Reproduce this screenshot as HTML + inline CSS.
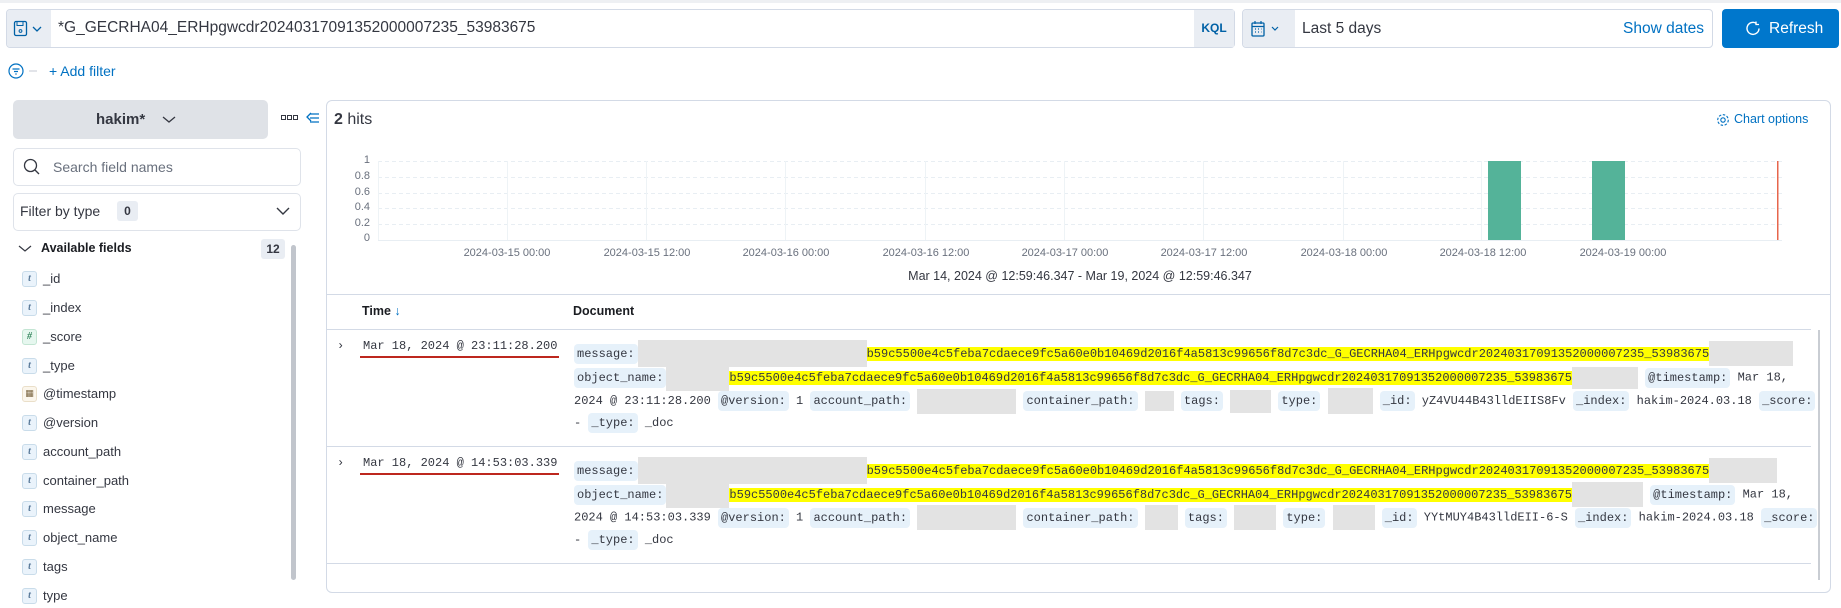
<!DOCTYPE html>
<html><head><meta charset="utf-8"><style>
*{box-sizing:border-box;margin:0;padding:0}
body{width:1841px;height:608px;background:#fff;font-family:"Liberation Sans",sans-serif;color:#343741;position:relative;overflow:hidden}
.a{position:absolute}
.mono{font-family:"Liberation Mono",monospace;font-size:12px}
.pill{display:inline-block;background:#e6f1fa;border-radius:4px;padding:0 3px;line-height:20px;color:#343741}
.g{display:inline-block;background:#e3e3e3;vertical-align:middle}
.y{background:#ffff00}
.line{position:absolute;left:574px;white-space:nowrap;line-height:22px}
.fi{position:absolute;left:22px;font-size:13px;color:#343741;line-height:16px}
.fi i{display:inline-block;width:15px;height:16px;border:1px solid #c9dcea;background:#eaf3fb;border-radius:3px;font-size:10px;font-weight:bold;color:#5a7a9a;text-align:center;line-height:14px;margin-right:6px;vertical-align:top;font-family:"Liberation Serif",serif}
.tick{position:absolute;top:247px;font-size:11px;color:#69707d;width:120px;text-align:center}
.yl{position:absolute;left:350px;width:20px;text-align:right;font-size:11px;color:#69707d}
</style></head><body>
<div class="a" style="left:0;top:0;width:1841px;height:3px;background:#eef0f3"></div>
<div class="a" style="left:6px;top:9px;width:1229px;height:39px;border:1px solid #d3dae6;border-radius:4px;background:#fff"></div>
<div class="a" style="left:7px;top:10px;width:44px;height:37px;background:#e9edf3;border-radius:3px 0 0 3px"></div>
<svg class="a" style="left:13px;top:20px" width="34" height="18"><rect x="1.5" y="1.5" width="12" height="14" rx="1.5" fill="none" stroke="#0061a6" stroke-width="1.3"/><rect x="4" y="1.5" width="6" height="4" fill="none" stroke="#0061a6"/><circle cx="7.5" cy="11" r="1.4" fill="none" stroke="#0061a6"/><path d="M20 7l4 4 4-4" fill="none" stroke="#0061a6" stroke-width="1.3"/></svg>
<div class="a" style="left:58px;top:19px;font-size:15.5px;color:#343741">*G_GECRHA04_ERHpgwcdr20240317091352000007235_53983675</div>
<div class="a" style="left:1194px;top:10px;width:40px;height:37px;background:#e9edf3;font-size:12px;font-weight:bold;color:#0061a6;text-align:center;line-height:37px">KQL</div>
<div class="a" style="left:1242px;top:9px;width:471px;height:39px;border:1px solid #d3dae6;border-radius:4px"></div>
<div class="a" style="left:1243px;top:10px;width:52px;height:37px;background:#e9edf3;border-radius:3px 0 0 3px"></div>
<svg class="a" style="left:1250px;top:20px" width="36" height="18"><rect x="2" y="3" width="12" height="13" rx="1" fill="none" stroke="#0061a6" stroke-width="1.3"/><path d="M2 6.5h12M5 1v3M11 1v3" stroke="#0061a6" stroke-width="1.2"/><path d="M5 9h1M8 9h1M11 9h0.5M5 12h1M8 12h1M11 12h0.5" stroke="#0061a6" stroke-width="1.2"/><path d="M22 7l3 3 3-3" fill="none" stroke="#0061a6" stroke-width="1.2"/></svg>
<div class="a" style="left:1302px;top:20px;font-size:15.5px">Last 5 days</div>
<div class="a" style="left:1623px;top:20px;font-size:15.5px;color:#0071c2">Show dates</div>
<div class="a" style="left:1722px;top:9px;width:117px;height:39px;background:#0077cc;border-radius:4px;color:#fff;font-size:15.5px;line-height:39px"><svg style="position:absolute;left:24px;top:12px" width="15" height="15"><path d="M10.5 2.5A6 6 0 1 0 13 7.5" fill="none" stroke="#fff" stroke-width="1.4"/><path d="M10 0.5v3h3" fill="none" stroke="#fff" stroke-width="1.3"/></svg><span style="position:absolute;left:47px">Refresh</span></div>
<svg class="a" style="left:8px;top:63px" width="30" height="16"><circle cx="8" cy="8" r="7" fill="none" stroke="#0071c2" stroke-width="1.2"/><path d="M4.5 6h7M6 8.5h4M7.3 11h1.4" stroke="#0071c2" stroke-width="1.2"/><path d="M21 8h8" stroke="#c5cad3"/></svg>
<div class="a" style="left:49px;top:63px;font-size:14px;color:#0071c2">+ Add filter</div>
<!-- sidebar -->
<div class="a" style="left:13px;top:100px;width:255px;height:39px;background:#dfe2e7;border-radius:5px"></div>
<div class="a" style="left:96px;top:111px;font-size:15px;font-weight:bold;color:#343741">hakim*</div>
<svg class="a" style="left:162px;top:115px" width="14" height="10"><path d="M1 2l6 5 6-5" fill="none" stroke="#343741" stroke-width="1.3"/></svg>
<svg class="a" style="left:281px;top:115px" width="17" height="6"><rect x="0.5" y="0.5" width="4" height="4" fill="none" stroke="#343741"/><rect x="6.5" y="0.5" width="4" height="4" fill="none" stroke="#343741"/><rect x="12.5" y="0.5" width="4" height="4" fill="none" stroke="#343741"/></svg>
<svg class="a" style="left:306px;top:112px" width="14" height="13"><path d="M5 1L1 5l4 4M4 2h9M4 6h9M4 10h9" fill="none" stroke="#0071c2" stroke-width="1.3"/></svg>
<div class="a" style="left:13px;top:148px;width:288px;height:38px;border:1px solid #dfe3ea;border-radius:5px"></div>
<svg class="a" style="left:23px;top:158px" width="18" height="18"><circle cx="7.5" cy="7.5" r="6" fill="none" stroke="#343741" stroke-width="1.3"/><path d="M12 12l4 4" stroke="#343741" stroke-width="1.3"/></svg>
<div class="a" style="left:53px;top:159px;font-size:14px;color:#69707d">Search field names</div>
<div class="a" style="left:13px;top:193px;width:288px;height:38px;border:1px solid #dfe3ea;border-radius:5px"></div>
<div class="a" style="left:20px;top:203px;font-size:14px;color:#343741">Filter by type</div>
<div class="a" style="left:117px;top:201px;width:21px;height:20px;background:#e9edf3;border-radius:3px;font-size:12px;font-weight:bold;text-align:center;line-height:20px">0</div>
<svg class="a" style="left:276px;top:206px" width="14" height="10"><path d="M1 2l6 6 6-6" fill="none" stroke="#343741" stroke-width="1.4"/></svg>
<svg class="a" style="left:18px;top:244px" width="14" height="10"><path d="M1 2l6 5 6-5" fill="none" stroke="#343741" stroke-width="1.2"/></svg>
<div class="a" style="left:41px;top:241px;font-size:12.5px;font-weight:bold;color:#1a1c21">Available fields</div>
<div class="a" style="left:261px;top:239px;width:24px;height:20px;background:#e9edf3;border-radius:3px;font-size:12px;font-weight:bold;text-align:center;line-height:20px">12</div>
<div class="a" style="left:291px;top:245px;width:5px;height:335px;background:#c1c5cc;border-radius:3px"></div>
<div class="fi" style="top:271px"><i>t</i>_id</div>
<div class="fi" style="top:300px"><i>t</i>_index</div>
<div class="fi" style="top:329px"><i style="background:#e6f7ef;border-color:#c3e5d3;color:#3c8a63">#</i>_score</div>
<div class="fi" style="top:358px"><i>t</i>_type</div>
<div class="fi" style="top:386px"><i style="background:#fbf6ec;border-color:#eadfc9;color:#7a6540;font-family:'DejaVu Sans';font-size:9px">&#9638;</i>@timestamp</div>
<div class="fi" style="top:415px"><i>t</i>@version</div>
<div class="fi" style="top:444px"><i>t</i>account_path</div>
<div class="fi" style="top:473px"><i>t</i>container_path</div>
<div class="fi" style="top:501px"><i>t</i>message</div>
<div class="fi" style="top:530px"><i>t</i>object_name</div>
<div class="fi" style="top:559px"><i>t</i>tags</div>
<div class="fi" style="top:588px"><i>t</i>type</div>
<!-- main panel -->
<div class="a" style="left:326px;top:100px;width:1505px;height:493px;border:1px solid #d3dae6;border-radius:6px"></div>
<div class="a" style="left:334px;top:111px;font-size:16px"><b>2</b> hits</div>
<svg class="a" style="left:1716px;top:113px" width="14" height="14"><circle cx="7" cy="7" r="2.2" fill="none" stroke="#0071c2" stroke-width="1.1"/><circle cx="7" cy="7" r="5.3" fill="none" stroke="#0071c2" stroke-width="1.1" stroke-dasharray="2.5 1.6"/></svg>
<div class="a" style="left:1734px;top:112px;font-size:12.5px;color:#0071c2">Chart options</div>
<svg class="a" style="left:0;top:0" width="1841" height="300">
<g stroke="#e8eef3" stroke-dasharray="4 3"><path d="M378 161.5H1782M378 177.5H1782M378 193.5H1782M378 208.5H1782M378 224.5H1782"/></g>
<g stroke="#eef3f6"><path d="M378.5 161V240M507.5 161V240M646.5 161V240M785.5 161V240M925.5 161V240M1064.5 161V240M1203.5 161V240M1343.5 161V240M1481.5 161V240M1621.5 161V240"/></g>
<path d="M378 240.5H1782" stroke="#e8eef3"/>
<rect x="1488" y="161" width="33" height="79" fill="#54b399"/>
<rect x="1592" y="161" width="33" height="79" fill="#54b399"/>
<rect x="1777" y="161" width="1.5" height="79" fill="#e7664c"/>
</svg>
<div class="yl" style="top:154px">1</div><div class="yl" style="top:170px">0.8</div><div class="yl" style="top:186px">0.6</div><div class="yl" style="top:201px">0.4</div><div class="yl" style="top:217px">0.2</div><div class="yl" style="top:232px">0</div>
<div class="tick" style="left:447px">2024-03-15 00:00</div>
<div class="tick" style="left:587px">2024-03-15 12:00</div>
<div class="tick" style="left:726px">2024-03-16 00:00</div>
<div class="tick" style="left:866px">2024-03-16 12:00</div>
<div class="tick" style="left:1005px">2024-03-17 00:00</div>
<div class="tick" style="left:1144px">2024-03-17 12:00</div>
<div class="tick" style="left:1284px">2024-03-18 00:00</div>
<div class="tick" style="left:1423px">2024-03-18 12:00</div>
<div class="tick" style="left:1563px">2024-03-19 00:00</div>
<div class="a" style="left:880px;top:269px;font-size:12.5px;color:#343741;width:400px;text-align:center">Mar 14, 2024 @ 12:59:46.347 - Mar 19, 2024 @ 12:59:46.347</div>
<div class="a" style="left:327px;top:294px;width:1503px;height:1px;background:#d3dae6"></div>
<div class="a" style="left:362px;top:304px;font-size:12.5px;font-weight:bold;color:#1a1c21">Time <span style="color:#0071c2;font-weight:normal">&#8595;</span></div>
<div class="a" style="left:573px;top:304px;font-size:12.5px;font-weight:bold;color:#1a1c21">Document</div>
<div class="a" style="left:327px;top:329px;width:1484px;height:1px;background:#d3dae6"></div>
<div class="a" style="left:327px;top:446px;width:1484px;height:1px;background:#d3dae6"></div>
<div class="a" style="left:327px;top:563px;width:1484px;height:1px;background:#d3dae6"></div>
<div class="a" style="left:1818px;top:330px;width:2px;height:250px;background:#c9cdd3"></div>

<div class="a mono" style="left:337px;top:339px;color:#343741">&#8250;</div>
<div class="a mono" style="left:363px;top:339px">Mar 18, 2024 @ 23:11:28.200</div>
<div class="a" style="left:360px;top:356px;width:199px;height:2px;background:#bd271e"></div>
<div class="line mono" style="top:340px"><span class="pill">message:</span><span class="g" style="width:229px;height:27px"></span><span class="y">b59c5500e4c5feba7cdaece9fc5a60e0b10469d2016f4a5813c99656f8d7c3dc_G_GECRHA04_ERHpgwcdr20240317091352000007235_53983675</span><span class="g" style="width:84px;height:25px"></span></div>
<div class="line mono" style="top:364px"><span class="pill">object_name:</span><span class="g" style="width:63px;height:27px"></span><span class="y">b59c5500e4c5feba7cdaece9fc5a60e0b10469d2016f4a5813c99656f8d7c3dc_G_GECRHA04_ERHpgwcdr20240317091352000007235_53983675</span><span class="g" style="width:66px;height:22px"></span> <span class="pill">@timestamp:</span> Mar 18,</div>
<div class="line mono" style="top:388px">2024 @ 23:11:28.200 <span class="pill">@version:</span> 1 <span class="pill">account_path:</span> <span class="g" style="width:99px;height:25px"></span> <span class="pill">container_path:</span> <span class="g" style="width:29px;height:20px"></span> <span class="pill">tags:</span> <span class="g" style="width:41px;height:23px"></span> <span class="pill">type:</span> <span class="g" style="width:45px;height:26px"></span> <span class="pill">_id:</span> yZ4VU44B43lldEIIS8Fv <span class="pill">_index:</span> hakim-2024.03.18 <span class="pill">_score:</span></div>
<div class="line mono" style="top:412px">- <span class="pill">_type:</span> _doc</div>

<div class="a mono" style="left:337px;top:456px;color:#343741">&#8250;</div>
<div class="a mono" style="left:363px;top:456px">Mar 18, 2024 @ 14:53:03.339</div>
<div class="a" style="left:360px;top:473px;width:199px;height:2px;background:#bd271e"></div>
<div class="line mono" style="top:457px"><span class="pill">message:</span><span class="g" style="width:229px;height:27px"></span><span class="y">b59c5500e4c5feba7cdaece9fc5a60e0b10469d2016f4a5813c99656f8d7c3dc_G_GECRHA04_ERHpgwcdr20240317091352000007235_53983675</span><span class="g" style="width:68px;height:25px"></span></div>
<div class="line mono" style="top:481px"><span class="pill">object_name:</span><span class="g" style="width:63px;height:27px"></span><span class="y">b59c5500e4c5feba7cdaece9fc5a60e0b10469d2016f4a5813c99656f8d7c3dc_G_GECRHA04_ERHpgwcdr20240317091352000007235_53983675</span><span class="g" style="width:71px;height:25px"></span> <span class="pill">@timestamp:</span> Mar 18,</div>
<div class="line mono" style="top:505px">2024 @ 14:53:03.339 <span class="pill">@version:</span> 1 <span class="pill">account_path:</span> <span class="g" style="width:99px;height:25px"></span> <span class="pill">container_path:</span> <span class="g" style="width:33px;height:25px"></span> <span class="pill">tags:</span> <span class="g" style="width:42px;height:25px"></span> <span class="pill">type:</span> <span class="g" style="width:42px;height:25px"></span> <span class="pill">_id:</span> YYtMUY4B43lldEII-6-S <span class="pill">_index:</span> hakim-2024.03.18 <span class="pill">_score:</span></div>
<div class="line mono" style="top:529px">- <span class="pill">_type:</span> _doc</div>
</body></html>
